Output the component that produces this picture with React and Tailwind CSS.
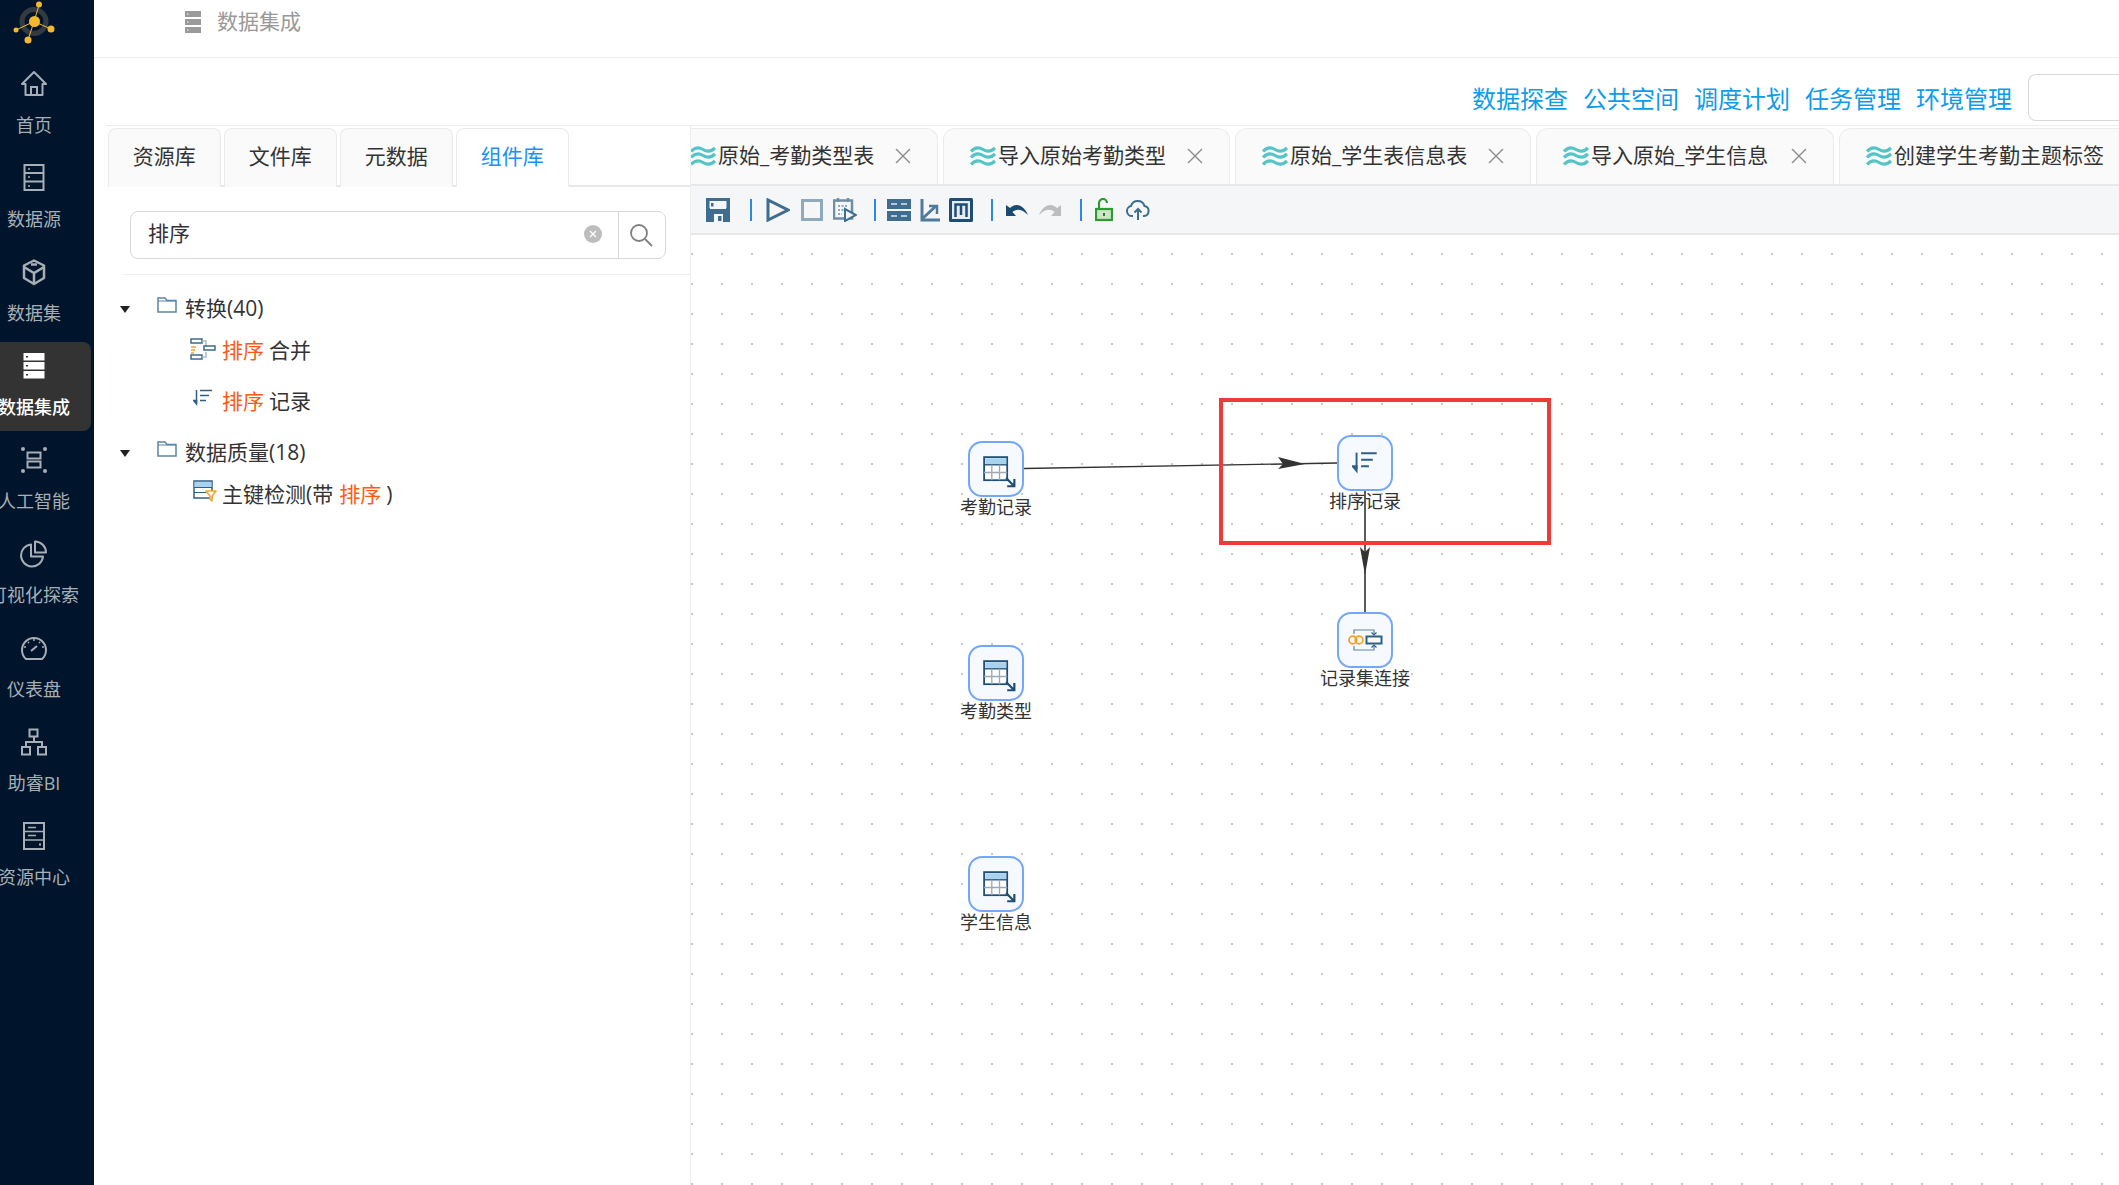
const cjk = "font-['Open_Sans','Noto_Sans_CJK_SC',sans-serif]";

function SideIcon({ name }) {
  const s = { fill: "none", stroke: "#a7aeb6", strokeWidth: 2 };
  if (name === "home")
    return (
      <svg width="28" height="28" viewBox="0 0 28 28" {...s}>
        <path d="M2 14 14 2l12 12h-3.500v11h-17V14Z" strokeLinejoin="round" />
        <path d="M11 25v-8h6v8" />
      </svg>
    );
  if (name === "source")
    return (
      <svg width="28" height="28" viewBox="0 0 28 28" {...s}>
        <rect x="4.500" y="1" width="19" height="25" />
        <path d="M4.500 9h19M4.500 17.500h19" />
        <path d="M8 5h2M8 13h2M8 22h2" strokeWidth="1.500" />
      </svg>
    );
  if (name === "cube")
    return (
      <svg width="28" height="28" viewBox="0 0 28 28" {...s} strokeWidth="2.500">
        <path d="M14 2.500 24 7.500v12.500L14 26 4 20V7.500Z" strokeLinejoin="round" />
        <path d="M4 9l10 6 10-6M14 15v11" />
        <path d="M11 6.500h6" />
      </svg>
    );
  if (name === "active")
    return (
      <svg width="28" height="28" viewBox="0 0 28 28">
        <rect x="3.500" y="1" width="21" height="7.500" fill="#fff" />
        <rect x="3.500" y="10" width="21" height="7.500" fill="#fff" />
        <rect x="3.500" y="19" width="21" height="7.500" fill="#fff" />
        <path d="M7 4v1.500M7 13v1.500M7 22v1.500" stroke="#333" strokeWidth="2" />
      </svg>
    );
  if (name === "ai")
    return (
      <svg width="28" height="28" viewBox="0 0 28 28">
        <circle cx="3" cy="3" r="2" fill="#a7aeb6" />
        <circle cx="25" cy="3" r="2" fill="#a7aeb6" />
        <circle cx="3" cy="25" r="2" fill="#a7aeb6" />
        <circle cx="25" cy="25" r="2" fill="#a7aeb6" />
        <rect x="7.500" y="6.500" width="13" height="6" {...s} />
        <rect x="7.500" y="15.500" width="13" height="6" {...s} />
      </svg>
    );
  if (name === "pie")
    return (
      <svg width="28" height="28" viewBox="0 0 28 28" {...s}>
        <path d="M11 4.500a11 11 0 1 0 12 12H11Z" strokeLinejoin="round" />
        <path d="M15 1.500a11 11 0 0 1 11 11H15Z" strokeLinejoin="round" />
      </svg>
    );
  if (name === "gauge")
    return (
      <svg width="28" height="28" viewBox="0 0 28 28" {...s}>
        <path d="M6 25h16a12 12 0 1 0-16 0Z" strokeLinejoin="round" />
        <path d="m11 17 6-5" />
        <path d="M14 5v2M6 13H4M24 13h-2M8 8l1 1M20 8l-1 1" strokeWidth="1.500" />
      </svg>
    );
  if (name === "tree")
    return (
      <svg width="28" height="28" viewBox="0 0 28 28" {...s}>
        <rect x="9.500" y="1.500" width="8" height="7" />
        <rect x="2" y="19" width="8" height="7.500" />
        <rect x="18" y="19" width="8" height="7.500" />
        <path d="M14 9v5M6 19v-5h16v5" />
      </svg>
    );
  return (
    <svg width="28" height="28" viewBox="0 0 28 28" {...s}>
      <rect x="4" y="1" width="20" height="26" />
      <path d="M4 9.500h20M4 18h20M8 5.500h8M8 13.500h8" strokeWidth="1.500" />
      <path d="M19 22.500h2" strokeWidth="2" />
    </svg>
  );
}

const menu = [
  ["home", "首页"],
  ["source", "数据源"],
  ["cube", "数据集"],
  ["active", "数据集成"],
  ["ai", "人工智能"],
  ["pie", "可视化探索"],
  ["gauge", "仪表盘"],
  ["tree", "助睿BI"],
  ["doc", "资源中心"],
];

function Sidebar() {
  return (
    <aside className="w-[94px] shrink-0 h-full bg-[#00152b] overflow-hidden">
      <div className="h-[57px] w-[68px] flex justify-center">
        <svg width="50" height="46" viewBox="0 0 50 46">
          <circle cx="25" cy="21.500" r="12" fill="none" stroke="#333a40" strokeWidth="5" />
          <path d="M25 21.500 30 5M25 21.500 42 29M25 21.500 19 40M25 21.500 7 30" stroke="#f3b92d" strokeWidth="1" />
          <circle cx="25.500" cy="21.500" r="5.500" fill="#f3b92d" />
          <circle cx="30" cy="4.500" r="3" fill="#f3b92d" />
          <circle cx="42" cy="29" r="3.500" fill="#f3b92d" />
          <circle cx="7" cy="30" r="2.500" fill="#f3b92d" />
          <circle cx="19" cy="40" r="3.500" fill="#f3b92d" />
        </svg>
      </div>
      {menu.map(([icon, label]) => {
        const on = icon === "active";
        return (
          <div key={icon} className="h-[94px] pt-[3px]">
            <div className={`w-[91px] h-[89px] rounded-r-lg ${on ? "bg-[#333333]" : ""}`}>
              <div className="w-[68px] h-full flex flex-col items-center pt-[10px] whitespace-nowrap">
                <SideIcon name={icon} />
                <span className={`mt-[14px] text-[18px] leading-[26px] ${on ? "text-white font-medium" : "text-[#a7aeb6]"}`}>{label}</span>
              </div>
            </div>
          </div>
        );
      })}
    </aside>
  );
}

function Folder() {
  return (
    <svg width="20" height="16" viewBox="0 0 20 16" fill="none" stroke="#5b85a3" strokeWidth="1.500" className="mb-[8px]">
      <path d="M1 15V1h7l2 2.500h9V15Z" />
      <path d="M1 4h18" strokeWidth="1" />
    </svg>
  );
}

function Caret() {
  return <span className="w-0 h-0 border-x-[5.500px] border-x-transparent border-t-[7px] border-t-[#222]" />;
}

function TreeIcon({ name }) {
  if (name === "merge")
    return (
      <svg width="26" height="22" viewBox="0 0 26 22" fill="none" stroke="#3f6b8c" strokeWidth="1.500">
        <rect x="1" y="1" width="11" height="4" />
        <rect x="1" y="17" width="11" height="4" />
        <path d="M12 3h4v6M12 19h4v-5" stroke="#a9bccb" />
        <rect x="14" y="8" width="11" height="4" />
        <path d="M1 9h5M1 12h4M1 15h3" stroke="#f5a623" />
      </svg>
    );
  if (name === "sort") return <SortIcon size={20} />;
  return (
    <svg width="24" height="22" viewBox="0 0 24 22" fill="none">
      <rect x="1" y="1" width="18" height="17" fill="#fff" stroke="#2f5f85" strokeWidth="1.500" />
      <rect x="1.500" y="2" width="17" height="5" fill="#a9d2ef" />
      <path d="M1 7.500h18M1 12.500h12" stroke="#2f5f85" strokeWidth="1.200" />
      <path d="M13 11h10l-4 5v5l-2-1.500V16Z" fill="#fff" stroke="#f5a623" strokeWidth="1.500" strokeLinejoin="round" />
    </svg>
  );
}

function SortIcon({ size }) {
  return (
    <svg width={size} height={size} viewBox="0 0 20 20" fill="none" stroke="#2f5f85" strokeWidth="1.500">
      <path d="M3.500 2v13" />
      <path d="M0.500 12.500 3.500 16V12.500Z" fill="#2f5f85" />
      <path d="M7 2.500h12M7 7.500h9M7 12.500h6" />
    </svg>
  );
}

function Hit() {
  return <span className="text-[#ff5a14]">排序</span>;
}

function LeftPanel() {
  const tabs = ["资源库", "文件库", "元数据", "组件库"];
  return (
    <div className="w-[597px] shrink-0 border-r border-[#eeeeee] pl-[14px] h-full">
      <div className="flex gap-[3.500px] pt-[2px] h-[61px] border-b-2 border-[#e8e8e8]">
        {tabs.map((t, i) => (
          <div
            key={t}
            className={`w-[112.500px] h-[59px] pb-[2px] rounded-t-lg border border-[#ebebeb] flex items-center justify-center text-[21px] ${
              i === 3 ? "bg-white text-[#1890ff] border-b-white" : "bg-[#fafafa] text-[#333] border-b-0"
            }`}
          >
            {t}
          </div>
        ))}
      </div>
      <div className="mr-[24px] ml-[22px] mt-[24px] h-[48px] rounded-lg border border-[#d9d9d9] flex items-stretch">
        <div className="flex-1 flex items-center pl-[17px] pr-[16px] pb-[2px] text-[21px] text-[#333]">
          <span>排序</span>
          <span className="ml-auto w-[18px] h-[18px] rounded-full bg-[#bdbdbd] flex items-center justify-center">
            <svg width="8" height="8" viewBox="0 0 8 8" stroke="#fff" strokeWidth="1.300">
              <path d="m1 1 6 6M7 1 1 7" />
            </svg>
          </span>
        </div>
        <div className="w-[47px] border-l border-[#d9d9d9] flex items-center justify-center pr-[2px] pb-[1px]">
          <svg width="26" height="26" viewBox="0 0 26 26" fill="none" stroke="#808080" strokeWidth="1.800">
            <circle cx="11" cy="11" r="8" />
            <path d="m17 17 7 7" />
          </svg>
        </div>
      </div>
      <div className="mt-[15px] ml-[15px] border-t border-[#eeeeee] h-[14px]" />
      <div className="text-[21px] text-[#333] -ml-[14px]">
        <div className="h-[42px] flex items-center pl-[26px]">
          <Caret />
          <span className="ml-[27px] mr-[8px] flex"><Folder /></span>
          转换(40)
        </div>
        <div className="h-[42px] flex items-center pl-[96px]">
          <span className="w-[32px] mb-[4px] flex"><TreeIcon name="merge" /></span>
          <Hit />
          <span className="ml-[5px]">合并</span>
        </div>
        <div className="h-[60px] flex items-center pl-[96px]">
          <span className="w-[32px] mb-[8px] pl-[3px] flex"><TreeIcon name="sort" /></span>
          <Hit />
          <span className="ml-[5px]">记录</span>
        </div>
        <div className="h-[42px] flex items-center pl-[26px]">
          <Caret />
          <span className="ml-[27px] mr-[8px] flex"><Folder /></span>
          数据质量(18)
        </div>
        <div className="h-[41px] flex items-center pl-[96px]">
          <span className="w-[32px] mb-[8px] pl-[3px] flex"><TreeIcon name="check" /></span>
          主键检测(带
          <span className="ml-[6px]"><Hit /></span>
          <span className="ml-[5px]">)</span>
        </div>
      </div>
    </div>
  );
}

function Wave() {
  return (
    <svg width="26" height="22" viewBox="0 0 26 22" fill="none" stroke="#54c4c6" strokeWidth="3.200" className="shrink-0">
      <path d="M1 6.500C5 2 9 2 13 4.500S21 7 25 3" />
      <path d="M1 12.500C5 8 9 8 13 10.500S21 13 25 9" />
      <path d="M1 19.500C5 15 9 15 13 17.500S21 20 25 16" />
    </svg>
  );
}

const fileTabs = [
  ["原始_考勤类型表", "w-[275px] -ml-[28px]"],
  ["导入原始考勤类型", "w-[287px]"],
  ["原始_学生表信息表", "w-[296px]"],
  ["导入原始_学生信息", "w-[298px]"],
  ["创建学生考勤主题标签", "w-[299px]"],
];

function FileTabs() {
  return (
    <div className="h-[60px] pt-[2px] flex gap-[5px] overflow-hidden border-b-2 border-[#e8e8e8] bg-white">
      {fileTabs.map(([t, w], i) => (
        <div key={t} className={`${w} shrink-0 h-[58px] pb-[3px] rounded-t-xl border border-b-0 border-[#ececec] bg-[#fafafa] flex items-center pl-[26px] pr-[26px]`}>
          <Wave />
          <span className="ml-[2px] text-[21px] text-[#333] whitespace-nowrap">{t}</span>
          {i < 4 && (
            <svg width="16" height="16" viewBox="0 0 16 16" stroke="#8c8c8c" strokeWidth="1.400" className="ml-auto">
              <path d="m1 1 14 14M15 1 1 15" />
            </svg>
          )}
        </div>
      ))}
    </div>
  );
}

function Divider({ cls }) {
  return <span className={`w-[2px] h-[22px] bg-[#2a8ae0] shrink-0 ${cls}`} />;
}

function Toolbar() {
  const c = "#3f6d90";
  return (
    <div className="h-[49px] shrink-0 bg-[#f5f6f8] border-b-2 border-[#e8e8e8] flex items-center pl-[15px]">
      <svg width="24" height="24" viewBox="0 0 24 24" fill={c}>
        <path fillRule="evenodd" d="M0 0h24v24H0ZM4 3v8h16V3ZM8 16v8h9v-8Z" />
        <rect x="3.500" y="3" width="17" height="7" fill="#f5f6f8" />
        <rect x="5" y="5" width="2.500" height="3.500" fill={c} />
        <rect x="12" y="18" width="3.500" height="5" fill={c} />
      </svg>
      <Divider cls="ml-[20px]" />
      <svg width="24" height="24" viewBox="0 0 24 24" fill="none" stroke={c} strokeWidth="3" className="ml-[14px]">
        <path d="M2 2v20l20-10Z" />
      </svg>
      <svg width="22" height="22" viewBox="0 0 22 22" fill="none" stroke="#8fa9bd" strokeWidth="3" className="ml-[11px]">
        <rect x="1.500" y="1.500" width="19" height="19" />
      </svg>
      <svg width="24" height="24" viewBox="0 0 24 24" fill="none" className="ml-[10px]">
        <rect x="1" y="2.500" width="18" height="18" stroke="#6f8ea6" strokeWidth="2.500" />
        <path d="M5 0v4M15 0v4" stroke="#6f8ea6" strokeWidth="2.500" />
        <path d="M5 8h10M5 12h6M5 16h4" stroke="#8fa9bd" strokeWidth="2" strokeDasharray="2 1.500" />
        <path d="M12 11v12l11-6Z" fill="#f5f6f8" stroke={c} strokeWidth="2" />
      </svg>
      <Divider cls="ml-[17px]" />
      <svg width="24" height="24" viewBox="0 0 24 24" fill="none" className="ml-[11px]">
        <rect x="0" y="1" width="24" height="10" fill={c} />
        <rect x="0" y="13" width="24" height="10" fill={c} />
        <path d="M4 6h6M14 6h6M4 18h6M14 18h6" stroke="#dfe6ec" strokeWidth="1.500" />
      </svg>
      <svg width="24" height="24" viewBox="0 0 24 24" fill="none" stroke="#4f7a9b" strokeWidth="3" className="ml-[6px]">
        <path d="M5 1v21h18" />
        <path d="M5 21 19 8" />
        <path d="M12 8h8v8" strokeWidth="2.500" />
      </svg>
      <svg width="24" height="24" viewBox="0 0 24 24" className="ml-[8px]">
        <rect width="24" height="24" rx="1.500" fill="#1f4e74" />
        <rect x="3" y="3" width="18" height="18" fill="#e6ecf1" />
        <path d="M6.500 19V6.500h11V19M12 7v10" fill="none" stroke="#1f4e74" strokeWidth="2.500" />
      </svg>
      <Divider cls="ml-[18px]" />
      <svg width="22" height="16" viewBox="0 0 22 16" fill="#1a4a70" className="ml-[13px]">
        <path d="M0 3v11h10L6.500 10C10 6.500 16 6.500 22 13 19 5 11-1 4 6Z" />
      </svg>
      <svg width="22" height="16" viewBox="0 0 22 16" fill="#bdbdbd" className="ml-[11px]">
        <path d="M22 3v11H12l3.500-4C12 6.500 6 6.500 0 13 3 5 11-1 18 6Z" />
      </svg>
      <Divider cls="ml-[19px]" />
      <svg width="18" height="24" viewBox="0 0 18 24" fill="none" className="ml-[13px]">
        <path d="M4 10V5a4 4 0 0 1 8 0" stroke="#2e9a30" strokeWidth="2.200" />
        <rect x="1" y="11" width="16" height="11" fill="#cfe3c8" stroke="#2e9a30" strokeWidth="2.200" />
        <path d="M8 15h2v3H8Z" fill="#2e7a30" />
      </svg>
      <svg width="24" height="22" viewBox="0 0 24 22" fill="none" stroke={c} strokeWidth="2" className="ml-[13px]">
        <path d="M7 17H6a5 5 0 0 1-1-9.900 7 7 0 0 1 13.500 0A5 5 0 0 1 18 17h-1" />
        <path d="M12 21V10M8.500 13.500 12 10l3.500 3.500" />
      </svg>
    </div>
  );
}

function NodeIcon({ kind }) {
  if (kind === "sort") return <SortIcon size={26} />;
  if (kind === "join")
    return (
      <svg width="35" height="22" viewBox="0 0 35 22" fill="none">
        <path d="M6 5V1h20v4M6 17v4h20v-4" stroke="#5b85a3" strokeWidth="1.200" />
        <path d="m23.500 3.500 2.500 2.500 2.500-2.500M23.500 18.500l2.500-2.500 2.500 2.500" stroke="#2f5f85" strokeWidth="1.200" />
        <circle cx="4.800" cy="11" r="3.800" stroke="#f5a01b" strokeWidth="1.700" />
        <circle cx="11" cy="11" r="3.800" stroke="#f5a01b" strokeWidth="1.700" />
        <rect x="18.500" y="7.500" width="15" height="7" fill="#fff" stroke="#2f5f85" strokeWidth="2" />
      </svg>
    );
  return (
    <svg width="33" height="33" viewBox="0 0 30 30" fill="none" className="translate-x-[3px] translate-y-[3px]">
      <rect x="1" y="1" width="21" height="21" fill="#fff" stroke="#1f4e74" strokeWidth="1.600" />
      <rect x="2" y="2" width="19" height="5.500" fill="#a9d2ef" />
      <path d="M1 8h21" stroke="#1f4e74" strokeWidth="1.200" />
      <path d="M8 8v14M15 8v14M1 15h21" stroke="#9aa9b5" strokeWidth="1.200" />
      <path d="m21 20 7 7M22 27.500h6.500V21" stroke="#1f4e74" strokeWidth="2" />
    </svg>
  );
}

// nodes sit on a free canvas, so their places are the content
const nodes = [
  ["考勤记录", "table", "left-[277px] top-[206px]"],
  ["排序记录", "sort", "left-[646px] top-[200px]"],
  ["记录集连接", "join", "left-[646px] top-[377px]"],
  ["考勤类型", "table", "left-[277px] top-[410px]"],
  ["学生信息", "table", "left-[277px] top-[621px]"],
];

function Node({ label, kind, cls }) {
  return (
    <div className={`absolute ${cls} w-[56px] flex flex-col items-center whitespace-nowrap`}>
      <div className="w-[56px] h-[56px] rounded-[14px] border-2 border-[#74a6fb] bg-[#f6faff] flex items-center justify-center">
        <NodeIcon kind={kind} />
      </div>
      <span className="text-[18px] leading-[24px] text-[#333] -mt-[2px]">{label}</span>
    </div>
  );
}

function Canvas() {
  return (
    <div className="relative flex-1 overflow-hidden bg-white bg-[radial-gradient(circle,#c8c8c8_0.8px,transparent_1.1px)] bg-[size:30px_30px] bg-[position:-14px_4px]">
      <svg className="absolute inset-0" width="1428" height="950" fill="none">
        <path d="M333 233.500 646 228" stroke="#333" strokeWidth="1.400" />
        <path d="M587 222 614 229 587 234 592 229Z" fill="#333" />
        <path d="M674 256v121" stroke="#333" strokeWidth="1.600" />
        <path d="M669 312 674 340 679 312 674 317Z" fill="#333" />
      </svg>
      {nodes.map(([l, k, c]) => (
        <Node key={l} label={l} kind={k} cls={c} />
      ))}
      <div className="absolute left-[528px] top-[163px] w-[332px] h-[147px] border-4 border-[#f03a3a]" />
    </div>
  );
}

export default function App() {
  const links = ["数据探查", "公共空间", "调度计划", "任务管理", "环境管理"];
  return (
    <div className={`w-[2119px] h-[1185px] flex bg-white overflow-hidden ${cjk}`}>
      <Sidebar />
      <div className="flex-1 min-w-0 flex flex-col h-full">
        <header className="h-[58px] shrink-0 border-b border-[#eeeeee] flex items-center pl-[91px] pb-[14px]">
          <svg width="16" height="22" viewBox="0 0 16 22">
            <rect width="16" height="6" fill="#9a9a9a" />
            <rect y="8" width="16" height="6" fill="#9a9a9a" />
            <rect y="16" width="16" height="6" fill="#9a9a9a" />
            <path d="M2 3h1.500M2 11h1.500M2 19h1.500" stroke="#fff" />
          </svg>
          <span className="ml-[16px] text-[21px] text-[#999]">数据集成</span>
        </header>
        <div className="h-[67px] shrink-0 flex justify-end items-center pt-[12px]">
          <div className="flex gap-[15px] text-[24px] text-[#0d9cea] mr-[16px] pt-[3px]">
            {links.map((l) => (
              <span key={l}>{l}</span>
            ))}
          </div>
          <div className="w-[91px] h-[47px] rounded-l-lg border border-r-0 border-[#d9d9d9]" />
        </div>
        <div className="flex-1 min-h-0 flex ml-[12px] border-t border-[#eeeeee]">
          <div className="-ml-[12px] flex flex-1 min-w-0 h-full">
            <LeftPanel />
            <div className="flex-1 min-w-0 flex flex-col h-full overflow-hidden">
              <FileTabs />
              <Toolbar />
              <Canvas />
            </div>
          </div>
        </div>
      </div>
    </div>
  );
}
